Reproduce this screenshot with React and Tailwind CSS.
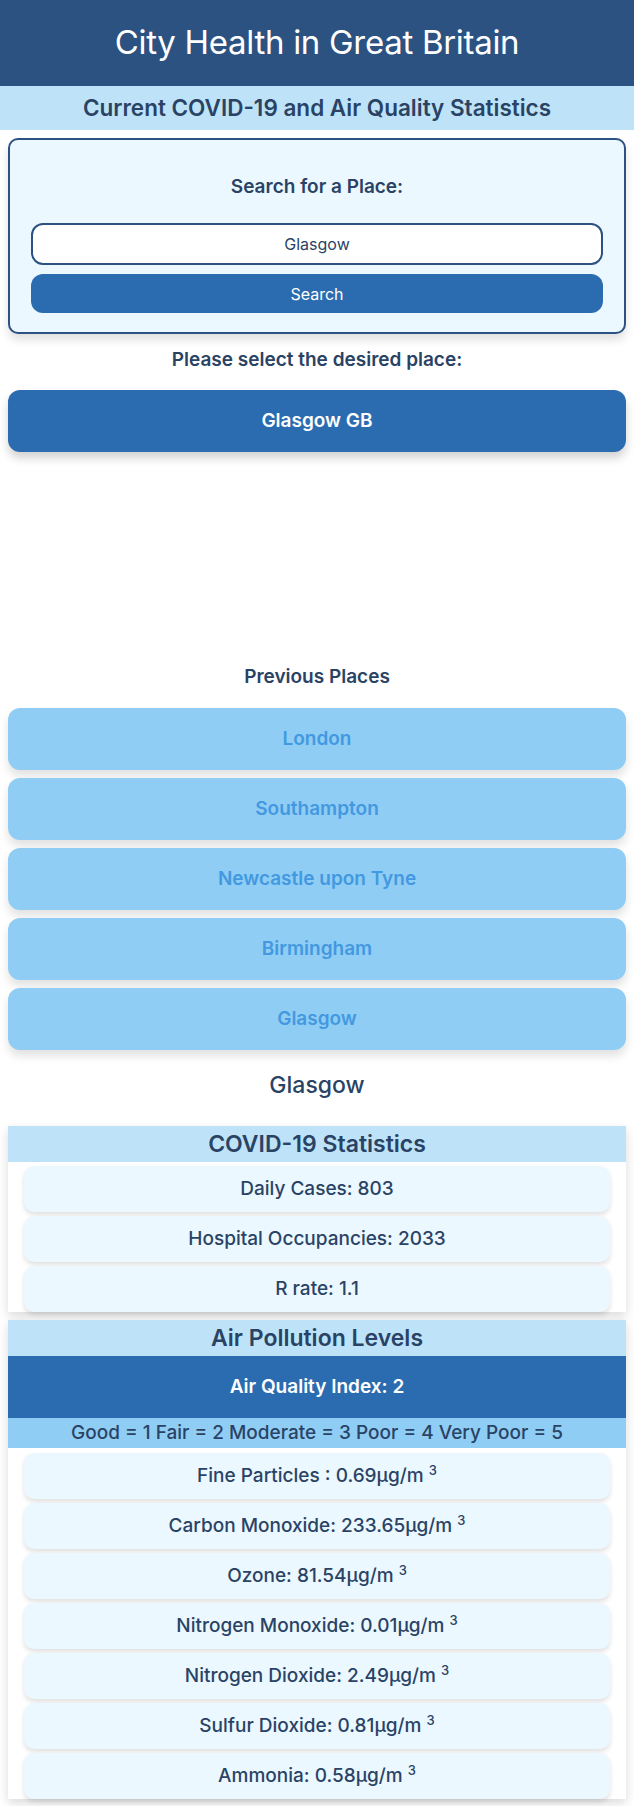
import React from "react";

const previousPlaces = [
  "London",
  "Southampton",
  "Newcastle upon Tyne",
  "Birmingham",
  "Glasgow",
];

const covidStats = [
  "Daily Cases: 803",
  "Hospital Occupancies: 2033",
  "R rate: 1.1",
];

const pollutants = [
  ["Fine Particles ", "0.69"],
  ["Carbon Monoxide", "233.65"],
  ["Ozone", "81.54"],
  ["Nitrogen Monoxide", "0.01"],
  ["Nitrogen Dioxide", "2.49"],
  ["Sulfur Dioxide", "0.81"],
  ["Ammonia", "0.58"],
];

const StatCard = ({ children }) => (
  <div className="flex h-[46px] items-center justify-center rounded-[10px] bg-[#ebf8ff] text-[19px] font-medium text-[#2a4365] shadow-[0_3px_5px_rgba(0,0,0,0.12)]">
    {children}
  </div>
);

const SectionTitle = ({ children }) => (
  <div className="flex h-[36px] items-center justify-center bg-[#bee3f8] text-[23px] font-semibold text-[#2a4365]">
    {children}
  </div>
);

const App = () => {
  return (
    <div className="min-h-screen bg-white pb-2 font-['Inter',sans-serif] text-[#2a4365]">
      <header className="flex h-[86px] items-center justify-center bg-[#2c5282]">
        <h1 className="text-[33px] font-normal tracking-[-0.3px] text-white">
          City Health in Great Britain
        </h1>
      </header>

      <div className="flex h-[44px] items-center justify-center bg-[#bee3f8]">
        <h2 className="text-[22.5px] font-semibold">
          Current COVID-19 and Air Quality Statistics
        </h2>
      </div>

      <div className="mx-2 mt-2 rounded-[10px] border-2 border-[#2c5282] bg-[#ebf8ff] px-[21px] pb-[19px] pt-[33px] shadow-[0_6px_10px_rgba(0,0,0,0.12)]">
        <h3 className="text-center text-[19px] font-semibold leading-[28px]">
          Search for a Place:
        </h3>
        <input
          type="text"
          defaultValue="Glasgow"
          className="mt-[22px] h-[42px] w-full rounded-[12px] border-2 border-[#2c5282] bg-white text-center text-[16px] text-[#2a4365] outline-none"
        />
        <button
          type="button"
          className="mt-[9px] h-[39px] w-full rounded-[12px] bg-[#2b6cb0] text-[16px] text-white"
        >
          Search
        </button>
      </div>

      <p className="mt-3 text-center text-[19px] font-semibold leading-[28px]">
        Please select the desired place:
      </p>
      <button
        type="button"
        className="mx-2 mt-4 block h-[62px] w-[calc(100%-16px)] rounded-[12px] bg-[#2b6cb0] text-[19px] font-semibold text-white shadow-[0_6px_10px_rgba(0,0,0,0.18)]"
      >
        Glasgow GB
      </button>

      <div className="h-[211px]" />

      <p className="text-center text-[19px] font-semibold leading-[28px]">
        Previous Places
      </p>
      <div className="mx-2 mt-[17px] flex flex-col gap-2">
        {previousPlaces.map((place) => (
          <button
            key={place}
            type="button"
            className="h-[62px] w-full rounded-[12px] bg-[#90cdf4] text-[19px] font-semibold text-[#4299e1] shadow-[0_6px_10px_rgba(0,0,0,0.12)]"
          >
            {place}
          </button>
        ))}
      </div>

      <h2 className="mt-[21px] text-center text-[23px] font-medium leading-[28px]">
        Glasgow
      </h2>

      <section className="mx-2 mt-[27px] bg-white shadow-[0_4px_10px_rgba(0,0,0,0.15)]">
        <SectionTitle>COVID-19 Statistics</SectionTitle>
        <div className="flex flex-col gap-1 px-4 pt-1">
          {covidStats.map((stat) => (
            <StatCard key={stat}>{stat}</StatCard>
          ))}
        </div>
      </section>

      <section className="mx-2 mt-2 bg-white shadow-[0_4px_10px_rgba(0,0,0,0.15)]">
        <SectionTitle>Air Pollution Levels</SectionTitle>
        <div className="flex h-[62px] items-center justify-center bg-[#2b6cb0] text-[19px] font-semibold text-white">
          Air Quality Index: 2
        </div>
        <div className="flex h-[30px] items-center justify-center bg-[#90cdf4] text-[19px] font-medium">
          Good = 1 Fair = 2 Moderate = 3 Poor = 4 Very Poor = 5
        </div>
        <div className="flex flex-col gap-1 px-4 pt-[5px]">
          {pollutants.map(([name, value]) => (
            <StatCard key={name}>
              <span>
                {name}: {value}µg/m <sup className="text-[13px]">3</sup>
              </span>
            </StatCard>
          ))}
        </div>
      </section>
    </div>
  );
};

export default App;
